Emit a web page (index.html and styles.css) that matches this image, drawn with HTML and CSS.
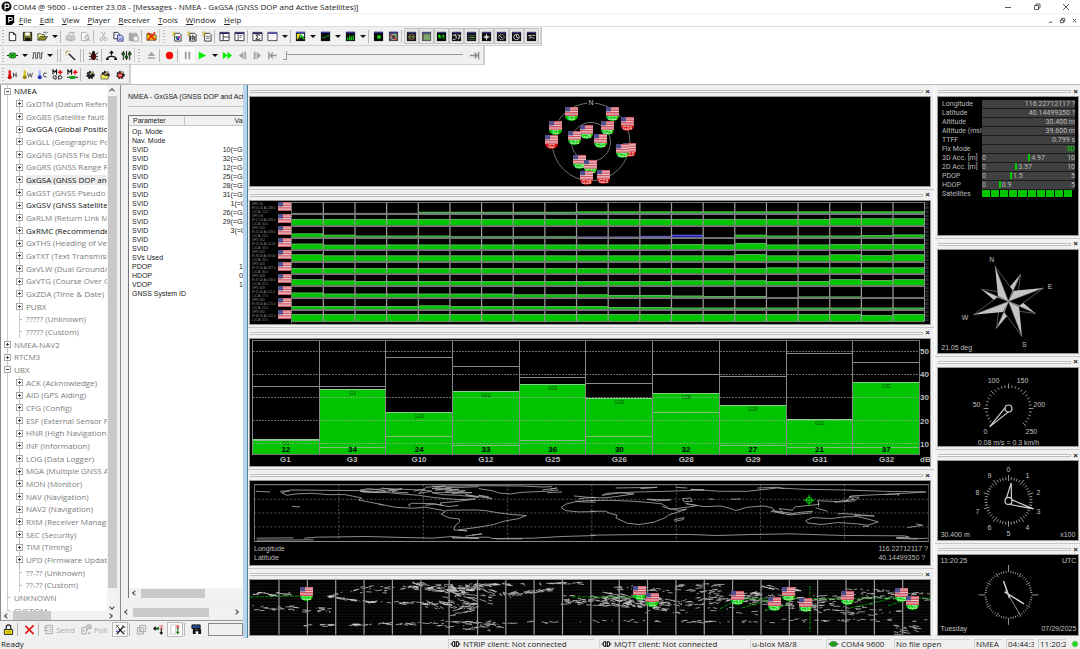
FILE: index.html
```html
<!DOCTYPE html>
<html lang="en">
<head>
<meta charset="utf-8">
<title>u-center 23.08</title>
<link rel="stylesheet" href="styles.css">
</head>
<body>
<svg class="defs" aria-hidden="true">
  <symbol id="logo" viewBox="0 0 12 12"><circle cx="6" cy="6" r="5.5" fill="#111"/><path d="M4.5 9.500V3.500H7a1.800 1.800 0 0 1 0 3.600H4.500" fill="none" stroke="#fff" stroke-width="1.300"/></symbol>
  <symbol id="doclogo" viewBox="0 0 12 12"><path d="M1 0H11V9L8 12H1Z" fill="#000"/><path d="M4.500 9V3H7a1.800 1.800 0 0 1 0 3.600H4.500" fill="none" stroke="#fff" stroke-width="1.300"/></symbol>
  <symbol id="new" viewBox="0 0 12 12"><path d="M2.500 1.500H7L9.500 4V10.500H2.500ZM7 1.500V4H9.500" fill="#fff" stroke="#222"/></symbol>
  <symbol id="save" viewBox="0 0 12 12"><path d="M1.500 1.500H10.500V10.500H1.500Z" fill="#77772a" stroke="#111"/><path d="M3.500 1.500H8.500V5H3.500Z" fill="#fff"/><path d="M3.500 7.500H9V10.500H3.500Z" fill="#111"/></symbol>
  <symbol id="open" viewBox="0 0 12 12"><path d="M1 10V3H4L5 4H8V6" fill="#ffff9a" stroke="#444"/><path d="M1 10L3.500 6H11.500L9 10Z" fill="#8a8a20" stroke="#333" stroke-width=".7"/><path d="M7 2Q9 0 10.500 2.500L11.500 1.500" fill="none" stroke="#222" stroke-width=".8"/></symbol>
  <symbol id="print" viewBox="0 0 12 12"><path d="M3.500 5L5 1.500H10L8.500 5M1.500 5.500H10.500V9.500H1.500ZM3 10.500H9M2 7.500H10" fill="#e8e8e8" stroke="#aaa"/></symbol>
  <symbol id="preview" viewBox="0 0 12 12"><path d="M1.500 1.500H6L8.500 4V10.500H1.500Z" fill="#f8f8f8" stroke="#aaa"/><circle cx="7.500" cy="7" r="2" fill="#eee" stroke="#999"/><path d="M9 8.500L11 11" stroke="#999"/></symbol>
  <symbol id="cut" viewBox="0 0 12 12"><path d="M4 1L7.500 7.500M8 1L4.500 7.500" stroke="#aaa"/><circle cx="3.800" cy="9" r="1.500" fill="none" stroke="#aaa"/><circle cx="8.200" cy="9" r="1.500" fill="none" stroke="#aaa"/></symbol>
  <symbol id="copy" viewBox="0 0 12 12"><path d="M1 1.500H5L7 3.500V8.500H1Z" fill="#fff" stroke="#223"/><path d="M5 4.500H9L11 6.500V11H5Z" fill="#dfe3ff" stroke="#23308c"/><path d="M6.500 7.500H9.500M6.500 9.200H9.500M2.500 4H4" stroke="#23308c" stroke-width=".7"/></symbol>
  <symbol id="paste" viewBox="0 0 12 12"><path d="M1.500 2.500H9.500V10.500H1.500Z" fill="#aaa" stroke="#999"/><path d="M4 1H7V3H4Z" fill="#ddd"/><path d="M5.500 5.500H11V11H5.500Z" fill="#f4f4f4" stroke="#999"/></symbol>
  <symbol id="clear" viewBox="0 0 12 12"><path d="M1 3H6L7 4.500H11V10H1Z" fill="#ffd800" stroke="#333" stroke-width=".8"/><path d="M2 2L10 10M10 1.500L2 10" stroke="#e02a10" stroke-width="1.800"/></symbol>
  <symbol id="starlog" viewBox="0 0 12 12"><path d="M4 2.500H9.500L11 4V11H4Z" fill="#fff" stroke="#333"/><path d="M1 1L5 5M5 1L1 5M3 0V6" stroke="#c5bb20" stroke-width=".8"/><path d="M5.500 6H9.500M5.500 8H9.500" stroke="#666"/></symbol>
  <symbol id="starmix" viewBox="0 0 12 12"><use href="#starlog"/><path d="M5 6H7.500V8H5Z" fill="#0a9a3a"/><path d="M7.500 5.500H10V8H7.500Z" fill="#d436c8"/><path d="M6 8H9V10H6Z" fill="#2030c0"/></symbol>
  <symbol id="starbars" viewBox="0 0 12 12"><use href="#starlog"/><path d="M5 5.500V10M7.500 4V10M9.500 6V10" stroke="#222"/></symbol>
  <symbol id="pane" viewBox="0 0 12 12"><path d="M1 1.500H11V10.500H1Z" fill="#fff" stroke="#334"/><path d="M1 2.500H11" stroke="#24246e" stroke-width="1.500"/><path d="M4.500 3V10.500M4.500 6.500H11" stroke="#334"/></symbol>
  <symbol id="pane2" viewBox="0 0 12 12"><path d="M1 1.500H11V10.500H1Z" fill="#fff" stroke="#334"/><path d="M1 2.500H11" stroke="#24246e" stroke-width="1.500"/><path d="M4.500 3V10.500M6 5H9M6 7H8" stroke="#556"/></symbol>
  <symbol id="sigma" viewBox="0 0 12 12"><path d="M1 1.500H11V10.500H1Z" fill="#fff" stroke="#334"/><path d="M1 2.500H11" stroke="#24246e" stroke-width="1.500"/><path d="M8.500 5V4.300H4L6.300 6.500L4 9H8.500V8.300" fill="none" stroke="#111"/></symbol>
  <symbol id="table" viewBox="0 0 12 12"><path d="M1 1.500H11V10.500H1Z" fill="#fff" stroke="#445"/><path d="M1 2.500H11" stroke="#4a4ac0" stroke-width="1.500"/><path d="M3 5H9M3 7H9M3 9H9" stroke="#ddd" stroke-width=".7"/></symbol>
  <symbol id="chartmix" viewBox="0 0 12 12"><path d="M1 1H11V11H1Z" fill="#111"/><path d="M1 1.500H11" stroke="#4050c8" stroke-width="1.500"/><path d="M2 3H6L3 9H2Z" fill="#f3e62d"/><path d="M6 3H10V6H6Z" fill="#e8f7ff"/><path d="M5 8L7 5L10 9" fill="none" stroke="#1ed02c" stroke-width="1.500"/></symbol>
  <symbol id="chartline" viewBox="0 0 12 12"><path d="M1 1H11V11H1Z" fill="#0a0a0a"/><path d="M1 1.500H11" stroke="#34349c" stroke-width="1.500"/><path d="M2 8L4 6.500L6 7L8 5L10 5.500" fill="none" stroke="#18a830"/></symbol>
  <symbol id="chartbars" viewBox="0 0 12 12"><path d="M1 1H11V11H1Z" fill="#0a0a0a"/><path d="M1 1.500H11" stroke="#34349c" stroke-width="1.500"/><path d="M3 10V7M5 10V5M7 10V6M9 10V4.500" stroke="#15d015" stroke-width="1.300"/></symbol>
  <symbol id="deviation" viewBox="0 0 12 12"><path d="M1 1H11V11H1Z" fill="#0a0a0a"/><path d="M1 1.500H11" stroke="#34349c" stroke-width="1.500"/><circle cx="6.500" cy="6.500" r="2.200" fill="#15c815"/></symbol>
  <symbol id="skyview" viewBox="0 0 12 12"><path d="M1 1H11V11H1Z" fill="#444"/><path d="M1 1.500H11" stroke="#34349c" stroke-width="1.500"/><circle cx="6" cy="6.500" r="3" fill="none" stroke="#ccc"/><path d="M3 4H5V6H3ZM7 8H9V10H7Z" fill="#e44"/><path d="M7 3H9V5H7Z" fill="#5cf05c"/></symbol>
  <symbol id="dsky" viewBox="0 0 12 12"><path d="M1 1H11V11H1Z" fill="#151515"/><path d="M1 1.500H11" stroke="#4646a8"/><path d="M3 4L9 9M9 4L3 9" stroke="#c22" /><path d="M2.500 6.500H9.500" stroke="#2c2"/><circle cx="6" cy="6.500" r="3" fill="none" stroke="#aaa" stroke-width=".6"/></symbol>
  <symbol id="dhist" viewBox="0 0 12 12"><path d="M1 1H11V11H1Z" fill="#555"/><path d="M1 1.500H11" stroke="#4646a8"/><path d="M3 3.500H10V10H3Z" fill="#6a6"/><path d="M3 5.500H10M3 8H10" stroke="#c99" stroke-width=".7"/></symbol>
  <symbol id="dsig" viewBox="0 0 12 12"><path d="M1 1H11V11H1Z" fill="#050505"/><path d="M1 1.500H11" stroke="#4646a8"/><path d="M2 4H5V7H7V4H9V9H8V6H6V8H3Z" fill="#1c1"/></symbol>
  <symbol id="dmap" viewBox="0 0 12 12"><path d="M1 1H11V11H1Z" fill="#111"/><path d="M1 1.500H11" stroke="#4646a8"/><path d="M2 5L5 4L6 8M7 4L10 5L8 9M2 9H5" fill="none" stroke="#ccc" stroke-width="1.200"/></symbol>
  <symbol id="ddata" viewBox="0 0 12 12"><path d="M1 1H11V11H1Z" fill="#181818"/><path d="M1 1.500H11" stroke="#4646a8"/><path d="M2 5H10M2 7H10M2 9H10" stroke="#5a5a5a" stroke-width=".8"/><path d="M5 7H9" stroke="#2c2"/></symbol>
  <symbol id="dcompass" viewBox="0 0 12 12"><path d="M1 1H11V11H1Z" fill="#111"/><path d="M1 1.500H11" stroke="#4646a8"/><path d="M6 2.500L7 5.500L10 6.500L7 7.500L6 10.500L5 7.500L2 6.500L5 5.500Z" fill="#ddd"/></symbol>
  <symbol id="dgauge" viewBox="0 0 12 12"><path d="M1 1H11V11H1Z" fill="#111"/><path d="M1 1.500H11" stroke="#4646a8"/><circle cx="6" cy="6.500" r="3" fill="none" stroke="#ccc" stroke-dasharray="1.500 .8"/><path d="M3 4L7 8" stroke="#ddd"/></symbol>
  <symbol id="dclock" viewBox="0 0 12 12"><path d="M1 1H11V11H1Z" fill="#111"/><path d="M1 1.500H11" stroke="#4646a8"/><circle cx="6" cy="6.500" r="3" fill="none" stroke="#ccc"/><path d="M6 4V6.500L8 7.500" fill="none" stroke="#ddd"/></symbol>
  <symbol id="dworld" viewBox="0 0 12 12"><path d="M1 1H11V11H1Z" fill="#111"/><path d="M1 1.500H11" stroke="#4646a8"/><path d="M2 5H6L4 6M7 4.500L10 5M3 8L6 7L9 8" fill="none" stroke="#ccc"/></symbol>
  <symbol id="plug" viewBox="0 0 12 12"><path d="M0 6H12" stroke="#111"/><path d="M5.500 3V9Q2 9 2 6T5.500 3M6.500 3V9Q10 9 10 6T6.500 3" fill="#19c419" stroke="#0a4a0a" stroke-width=".7"/></symbol>
  <symbol id="unplug" viewBox="0 0 12 12"><path d="M0 6H2M10 6H12" stroke="#111"/><path d="M5 3V9Q2 9 2 6T5 3M7 3V9Q10 9 10 6T7 3" fill="#fff" stroke="#111" stroke-width="1.300"/></symbol>
  <symbol id="wave" viewBox="0 0 12 12"><path d="M0 9H1.500V3H4V9H6V3H8.500V9H10.500V3H12" fill="none" stroke="#333" stroke-width=".9"/></symbol>
  <symbol id="wand" viewBox="0 0 12 12"><path d="M4 4L11 11" stroke="#222" stroke-width="1.500"/><path d="M3 0V2M0 3H2M1 1L2 2M6 1L5 2M1 6L2 5" stroke="#a59a1a"/></symbol>
  <symbol id="bug" viewBox="0 0 12 12"><ellipse cx="6" cy="7" rx="2.800" ry="4" fill="#5a0d0d"/><circle cx="6" cy="2.800" r="1.600" fill="#111"/><path d="M1 3L4 5M11 3L8 5M1 7H3.500M11 7H8.500M1 11L4 9M11 11L8 9M6 4V11" stroke="#111" stroke-width=".9"/></symbol>
  <symbol id="antenna" viewBox="0 0 12 12"><path d="M6 1V6M4 3.500L6 1.500L8 3.500M1 10Q1.500 7 6 7T11 10" fill="none" stroke="#111" stroke-width="1.300"/><path d="M0 9H3V11H0ZM9 9H12V11H9Z" fill="#111"/></symbol>
  <symbol id="sliders" viewBox="0 0 12 12"><path d="M2.500 1V11M6 1V11M9.500 1V11" stroke="#111"/><path d="M1 3H4V5.500H1ZM8 3H11V5.500H8ZM4.500 6.500H7.500V9H4.500Z" fill="#157a15" stroke="#111" stroke-width=".6"/></symbol>
  <symbol id="eject" viewBox="0 0 12 12"><path d="M6 2L10 6.500H2ZM2 8H10V9.500H2Z" fill="#a5a5a5"/></symbol>
  <symbol id="rec" viewBox="0 0 12 12"><circle cx="6" cy="6" r="4" fill="#f00"/></symbol>
  <symbol id="pause" viewBox="0 0 12 12"><path d="M4 2V10M8 2V10" stroke="#999" stroke-width="1.800"/></symbol>
  <symbol id="play" viewBox="0 0 12 12"><path d="M2 2L10 6L2 10Z" fill="#0e0"/></symbol>
  <symbol id="ff" viewBox="0 0 12 12"><path d="M1 2L6 6L1 10ZM6 2L11 6L6 10Z" fill="#0e0"/></symbol>
  <symbol id="stepb" viewBox="0 0 12 12"><path d="M7 2V10L2 6ZM8 2H10V10H8Z" fill="#a5a5a5"/></symbol>
  <symbol id="stepf" viewBox="0 0 12 12"><path d="M5 2V10L10 6ZM2 2H4V10H2Z" fill="#a5a5a5"/></symbol>
  <symbol id="home" viewBox="0 0 12 12"><path d="M2 2V10M10.500 6H4M6.500 3L3.500 6L6.500 9" fill="none" stroke="#999" stroke-width="1.500"/></symbol>
  <symbol id="end" viewBox="0 0 12 12"><path d="M10.500 2V10M1 6H8M6 3L9 6L6 9" fill="none" stroke="#888" stroke-width="1.500"/></symbol>
  <symbol id="hot" viewBox="0 0 12 12"><path d="M3 1.500V9" stroke="#e01010" stroke-width="2.600"/><circle cx="3" cy="9" r="2.200" fill="#c00"/><path d="M7 4V9M10 4V9M7 6.500H10" fill="none" stroke="#333"/></symbol>
  <symbol id="warm" viewBox="0 0 12 12"><path d="M3 1.500V9" stroke="#d8c820" stroke-width="2.600"/><circle cx="3" cy="9" r="2.200" fill="#998c10"/><path d="M6 4L7.300 9L8.800 5L10.200 9L11.500 4" fill="none" stroke="#444" stroke-width=".9"/></symbol>
  <symbol id="cold" viewBox="0 0 12 12"><path d="M3 1.500V9" stroke="#9ab6ff" stroke-width="2.600"/><circle cx="3" cy="9" r="2.200" fill="#2233bb"/><path d="M10.500 4.500Q7 3.500 7 6.500T10.500 8.500" fill="none" stroke="#333"/></symbol>
  <symbol id="mplus" viewBox="0 0 12 12"><path d="M1 6V1L3 3.500L5 1V6" fill="none" stroke="#111" stroke-width="1.200"/><path d="M9 1V6M6.500 3.500H11.500" stroke="#e01818" stroke-width="1.800"/><path d="M4.500 7.500V11Q1 11 1 9T4.500 7.500M7 7.500V11Q11 11 11 9T7 7.500" fill="#fff" stroke="#111"/></symbol>
  <symbol id="mplug" viewBox="0 0 12 12"><path d="M1 6V1L3 3.500L5 1V6" fill="none" stroke="#111" stroke-width="1.200"/><path d="M9 1V6M6.500 3.500H11.500" stroke="#e01818" stroke-width="1.800"/><path d="M0 9H12" stroke="#111"/><path d="M3 7.500H9V11H3Z" fill="#19a419"/></symbol>
  <symbol id="gear" viewBox="0 0 12 12"><circle cx="6" cy="6.500" r="3.600" fill="#222" stroke="#222" stroke-width="2" stroke-dasharray="1.800 1.200"/><path d="M5 6L9 3" stroke="#cfc77a" stroke-width="1.500"/></symbol>
  <symbol id="gearopen" viewBox="0 0 12 12"><use href="#gear"/><path d="M1 11V6H4L5 7H9V11Z" fill="#eee35a" stroke="#333" stroke-width=".6"/></symbol>
  <symbol id="gearred" viewBox="0 0 12 12"><use href="#gear"/><circle cx="5.500" cy="7" r="2.600" fill="#e42020"/><path d="M4 7H7" stroke="#fff"/></symbol>
  <symbol id="lock" viewBox="0 0 12 12"><path d="M3.500 6V3.500Q3.500 1 6 1T8.500 3.500V6" fill="none" stroke="#222" stroke-width="1.300"/><path d="M1.500 6H10.500V11.500H1.500Z" fill="#ffee00" stroke="#222"/><path d="M3 8H9M3 9.800H9" stroke="#8b8400" stroke-width=".8"/></symbol>
  <symbol id="redx" viewBox="0 0 12 12"><path d="M1.500 2L10.500 11M10.500 1.500L1.500 10.500" stroke="#e01515" stroke-width="1.800"/></symbol>
  <symbol id="send" viewBox="0 0 12 12"><path d="M3 1.500H10.500V10.500H3ZM1 4H6M1 7H6M7 4H9M7 6H9M7 8H9" fill="none" stroke="#aaa"/></symbol>
  <symbol id="poll" viewBox="0 0 12 12"><path d="M1 4H6V11H1ZM3 6V9" fill="none" stroke="#aaa"/><path d="M5 3L7 1H11V5H8L7 7" fill="#ccc" stroke="#aaa"/><path d="M8 9H10V11H8Z" fill="#aaa"/></symbol>
  <symbol id="tools" viewBox="0 0 12 12"><path d="M2 11L9 3M4 5L10 11" stroke="#111" stroke-width="1.400"/><path d="M8 1L11 4M8 3H11M1 1L5 5M1 4L4 1M9 9L11 7" stroke="#333" stroke-width=".9"/><path d="M1 8H4" stroke="#2a2ac8"/></symbol>
  <symbol id="docs" viewBox="0 0 12 12"><path d="M4 1.500H10.500V8.500H4ZM1.500 4H8V11H1.500Z" fill="#ececec" stroke="#aaa"/><path d="M3 8L5 6L6 9" fill="none" stroke="#999"/></symbol>
  <symbol id="flow" viewBox="0 0 12 12"><path d="M7 1H11V6H7Z" fill="#f2a0a0"/><path d="M1 5H6M3 3L1 5L3 7" fill="none" stroke="#111" stroke-width="1.300"/><path d="M4 3.500H6.500V6.500H4Z" fill="#117a22"/><path d="M9 5V11M7.500 9L9 11L10.500 9" fill="none" stroke="#111" stroke-width="1.200"/></symbol>
  <symbol id="flow2" viewBox="0 0 12 12"><path d="M1 1H6V11H1Z" fill="#fff" stroke="#ccc"/><path d="M7 1H10V5H7Z" fill="#f06a6a"/><path d="M8.500 4V10M7 8.500L8.500 10.500L10 8.500" fill="none" stroke="#1a7a1a" stroke-width="1.200"/></symbol>
  <symbol id="find" viewBox="0 0 12 12"><path d="M1 1H10V5H1Z" fill="#2a4a9a" stroke="#111"/><path d="M2 11V6L4 4H5V6H7V4H9L11 6V11H8V8H5V11Z" fill="#111"/></symbol>
  <symbol id="flag" viewBox="0 0 13 9"><path d="M0 0H13V9H0Z" fill="#f1c6cb"/><path d="M0 .8H13M0 3.300H13M0 5.800H13M0 8.300H13" stroke="#cc5763" stroke-width="1.300"/><path d="M0 0H5V4.500H0Z" fill="#50508c"/></symbol>
</svg>

<div class="app">
  <header class="titlebar">
    <svg class="ico"><use href="#logo"/></svg>
    <h1>COM4 @ 9600 - u-center 23.08 - [Messages - NMEA - GxGSA (GNSS DOP and Active Satellites)]</h1>
    <div class="winctl">
      <button aria-label="Minimize"><svg viewBox="0 0 8 8"><path d="M1 4.500H7"/></svg></button>
      <button aria-label="Restore"><svg viewBox="0 0 8 8"><path d="M1.500 2.500H5.500V6.500H1.500ZM3 2.500V1H7V5H5.500"/></svg></button>
      <button aria-label="Close"><svg viewBox="0 0 8 8"><path d="M1 1L7 7M7 1L1 7"/></svg></button>
    </div>
  </header>
  <nav class="menubar">
    <svg class="ico"><use href="#doclogo"/></svg>
    <button><u>F</u>ile</button><button><u>E</u>dit</button><button><u>V</u>iew</button><button><u>P</u>layer</button><button><u>R</u>eceiver</button><button><u>T</u>ools</button><button><u>W</u>indow</button><button><u>H</u>elp</button>
    <div class="mdictl">
      <button aria-label="Minimize window"><svg viewBox="0 0 8 8"><path d="M2 6H6"/></svg></button>
      <button aria-label="Restore window"><svg viewBox="0 0 8 8"><path d="M1.500 3.500H5V6.500H1.500ZM3 3.500V1.500H6.500V5H5"/></svg></button>
      <button aria-label="Close window"><svg viewBox="0 0 8 8"><path d="M2 2L6 6M6 2L2 6"/></svg></button>
    </div>
  </nav>

  <div class="toolbars">
    <div class="toolbar">
      <i class="grip first"></i>
      <button aria-label="New"><svg><use href="#new"/></svg></button><button aria-label="Save"><svg><use href="#save"/></svg></button><button aria-label="Open"><svg><use href="#open"/></svg></button><button class="dd" aria-label="Recent files"></button>
      <i class="sep"></i>
      <button aria-label="Print"><svg><use href="#print"/></svg></button><button aria-label="Preview"><svg><use href="#preview"/></svg></button>
      <i class="sep"></i>
      <button aria-label="Cut"><svg><use href="#cut"/></svg></button><button aria-label="Copy"><svg><use href="#copy"/></svg></button><button aria-label="Paste"><svg><use href="#paste"/></svg></button>
      <i class="sep"></i>
      <button aria-label="Clear"><svg><use href="#clear"/></svg></button>
      <i class="grip"></i>
      <button aria-label="Packet console"><svg><use href="#starmix"/></svg></button><button aria-label="Binary console"><svg><use href="#starbars"/></svg></button><button aria-label="Text console"><svg><use href="#starlog"/></svg></button>
      <i class="sep"></i>
      <button aria-label="Messages"><svg><use href="#pane"/></svg></button><button aria-label="Configuration"><svg><use href="#pane2"/></svg></button>
      <i class="sep"></i>
      <button aria-label="Statistic"><svg><use href="#sigma"/></svg></button><button aria-label="Table"><svg><use href="#table"/></svg></button><button class="dd" aria-label="Table views"></button>
      <i class="sep"></i>
      <button aria-label="Map"><svg><use href="#chartmix"/></svg></button><button class="dd" aria-label="Maps"></button><button aria-label="Chart"><svg><use href="#chartline"/></svg></button><button class="dd" aria-label="Charts"></button><button aria-label="Histogram"><svg><use href="#chartbars"/></svg></button><button class="dd" aria-label="Histograms"></button>
      <i class="sep"></i>
      <button aria-label="Deviation"><svg><use href="#deviation"/></svg></button><button aria-label="Sky"><svg><use href="#skyview"/></svg></button>
      <i class="sep"></i>
      <button class="on" aria-label="Satellite position"><svg><use href="#dsky"/></svg></button><button class="on" aria-label="Signal history"><svg><use href="#dhist"/></svg></button><button class="on" aria-label="Satellite level"><svg><use href="#dsig"/></svg></button><button class="on" aria-label="World position"><svg><use href="#dmap"/></svg></button><button class="on" aria-label="Data"><svg><use href="#ddata"/></svg></button><button class="on" aria-label="Compass"><svg><use href="#dcompass"/></svg></button><button class="on" aria-label="Speed meter"><svg><use href="#dgauge"/></svg></button><button class="on" aria-label="Clock"><svg><use href="#dclock"/></svg></button><button class="on" aria-label="Orbit map"><svg><use href="#dworld"/></svg></button>
    </div>
    <div class="toolbar">
      <i class="grip first"></i>
      <button aria-label="Connect"><svg><use href="#plug"/></svg></button><button class="dd" aria-label="Ports"></button><button aria-label="Baud rate"><svg><use href="#wave"/></svg></button><button class="dd" aria-label="Baud rates"></button>
      <i class="sep wide"></i>
      <button aria-label="Autobauding"><svg><use href="#wand"/></svg></button>
      <i class="sep wide"></i>
      <button aria-label="Debug"><svg><use href="#bug"/></svg></button>
      <i class="sep"></i>
      <button aria-label="Antenna"><svg><use href="#antenna"/></svg></button><button aria-label="Settings"><svg><use href="#sliders"/></svg></button>
      <i class="grip"></i>
      <button aria-label="Eject"><svg><use href="#eject"/></svg></button>
      <i class="sep"></i>
      <button aria-label="Record"><svg><use href="#rec"/></svg></button>
      <i class="sep"></i>
      <button class="lit" aria-label="Pause"><svg><use href="#pause"/></svg></button><button aria-label="Play"><svg><use href="#play"/></svg></button><button class="dd" aria-label="Play options"></button><button aria-label="Fast forward"><svg><use href="#ff"/></svg></button><button aria-label="Step back"><svg><use href="#stepb"/></svg></button><button aria-label="Step forward"><svg><use href="#stepf"/></svg></button><button aria-label="To start"><svg><use href="#home"/></svg></button>
      <input class="seek" type="range" min="0" max="100" value="0" aria-label="Position in log">
      <button aria-label="To end"><svg><use href="#end"/></svg></button>
    </div>
    <div class="toolbar">
      <i class="grip first"></i>
      <button aria-label="Hot start"><svg><use href="#hot"/></svg></button><button aria-label="Warm start"><svg><use href="#warm"/></svg></button><button aria-label="Cold start"><svg><use href="#cold"/></svg></button><button aria-label="Aid disconnected"><svg><use href="#mplus"/></svg></button><button aria-label="Aid connected"><svg><use href="#mplug"/></svg></button>
      <i class="sep"></i>
      <button aria-label="Store configuration"><svg><use href="#gear"/></svg></button><button aria-label="Load configuration"><svg><use href="#gearopen"/></svg></button><button aria-label="Revert configuration"><svg><use href="#gearred"/></svg></button>
    </div>
  </div>

  <main class="workspace">
    <section class="messages">
      <div class="split">
        <div class="treebox">
          <ul class="tree" id="tree"></ul>
          <div class="vbar"><b class="up"></b><i></i><b class="down"></b></div>
          <div class="hbar"><b class="left"></b><i class="t1"></i><b class="right"></b></div>
        </div>
        <div class="detail">
          <h2>NMEA - GxGSA (GNSS DOP and Active Satellites)</h2>
          <div class="tablebox">
            <div class="clip">
              <table>
                <thead><tr><th>Parameter</th><th>Value</th></tr></thead>
                <tbody id="params"></tbody>
              </table>
            </div>
            <div class="hbar"><b class="left"></b><i class="t2"></i></div>
          </div>
          <div class="hbar low"><b class="left"></b><i class="t3"></i><b class="right"></b></div>
        </div>
      </div>
      <div class="msgbar">
        <button aria-label="Lock"><svg><use href="#lock"/></svg></button><i class="sep"></i>
        <button aria-label="Clear message"><svg><use href="#redx"/></svg></button><i class="sep"></i>
        <button class="word" disabled><svg><use href="#send"/></svg>Send</button><button class="word" disabled><svg><use href="#poll"/></svg>Poll</button>
        <button class="on" aria-label="Auto polling"><svg><use href="#tools"/></svg></button><i class="sep"></i>
        <button aria-label="Copy message"><svg><use href="#docs"/></svg></button><button aria-label="Transfer"><svg><use href="#flow"/></svg></button><button class="on" aria-label="Split"><svg><use href="#flow2"/></svg></button><i class="sep"></i>
        <button aria-label="Find"><svg><use href="#find"/></svg></button>
        <input type="text" aria-label="Search text">
      </div>
    </section>

    <section class="docks centre">
      <article class="panel">
        <div class="cap"><i></i><button aria-label="Close satellite position">×</button></div>
        <svg class="view" id="sky" viewBox="250 96 680 89"></svg>
      </article>
      <article class="panel">
        <div class="cap"><i></i><button aria-label="Close signal history">×</button></div>
        <div class="view history" id="history"></div>
      </article>
      <article class="panel">
        <div class="cap"><i></i><button aria-label="Close satellite level">×</button></div>
        <div class="view signal">
          <div class="plot" id="plot"></div>
          <div class="axis"><b>50</b><b>40</b><b>30</b><b>20</b><b>10</b></div>
          <div class="names" id="names"></div>
          <b class="unit">dB</b>
        </div>
      </article>
      <article class="panel">
        <div class="cap"><i></i><button aria-label="Close world position">×</button></div>
        <div class="view world">
          <svg viewBox="12 9 2022 174" preserveAspectRatio="none">
            <path class="dots" d="M266 11V183M519 11V183M772 11V183M1024 11V183M1277 11V183M1529 11V183M1781 11V183M13 55H2035M13 96H2035M13 138H2035"/>
            <path class="frame" d="M13 11H2034V182H13Z"/>
            <g transform="translate(-15 -39)" class="coast">
              <path d="M32 70L75 72M105 70L135 68L110 74L125 82L150 78L200 76L250 80L300 80L330 86L350 90L340 96L375 103L410 110L450 118L500 121L540 118L590 127L600 131L587 139L612 150L642 153L643 162L628 175L626 186L665 189L640 186L700 178L745 170L775 160L820 152L843 143L800 140L760 135L720 128L690 126L600 127"/>
              <path d="M135 66L345 68L420 62L530 66M495 118L490 110L502 106L560 107L590 112L585 105L640 100L690 93L640 95L600 92L560 88L520 82L470 78L430 74L350 72M540 112L570 108L610 116L640 112M400 108L415 112M140 115L165 117"/>
              <path d="M345 66L370 62L420 68L380 72L345 70L400 74L450 66L410 60M430 68L470 62L440 72L490 74M505 70L540 62L520 76L560 70L530 66M540 58L600 54L560 62L620 60L570 66L640 64L600 70L660 68L620 76L680 74L560 74L590 80L640 82L700 88L660 80L740 92L700 82L730 86M600 58L650 58L700 56"/>
              <path d="M560 55L700 53L830 54L890 57L920 56M700 62L740 68L760 75L795 78L830 73L900 70L940 66M890 66L935 60L915 64M905 74L950 72M1050 97L990 100M1050 103L990 101L960 109L947 119L960 128L1000 132L1050 131M985 84L1050 90M1000 92L1048 88"/>
              <path d="M35 217L205 216M145 210L35 211M178 211L215 208L360 206L560 211L620 206L700 212L620 210L730 208L740 212L860 211L950 206L1050 203M660 205L710 198L680 202M750 213L830 213"/>
            </g>
            <g transform="translate(1020 -39)" class="coast">
              <path d="M0 130L45 130L60 137L80 142L76 150L110 166L145 170L190 163L222 150L235 141L265 131L288 124L262 127L235 122L215 108L180 104L130 100L60 97L0 98M250 156L280 149L278 155L255 160ZM170 94L240 96L200 99ZM275 92L300 90L305 100L280 101ZM215 115L240 124L280 119L320 113L285 107"/>
              <path d="M285 107L340 116L390 114L420 122L435 128L470 118L520 114L545 120L552 130L580 138L565 122L605 127L612 117L660 112L685 109L680 98L740 101L770 96L780 84L860 80L940 76L1005 72L880 70L760 66L640 64L560 60L470 70L390 70L300 64L340 66L230 70L140 72L50 76L35 82L90 74L130 78L75 86L40 90L0 88"/>
              <path d="M75 60L200 58L150 62M255 58L290 60M540 130L600 141L660 135L665 130L620 134L590 140M545 128L600 136M675 120L710 130M683 104V116M730 103L790 99L805 88L775 86L790 94L765 98M740 138L760 137L850 144L790 143M645 158L665 149L720 152L760 147L800 146L825 152L862 162L830 172L800 168L740 164L690 170L650 165ZM815 176L835 175M950 179L995 172L975 168M420 94L450 93M355 93L370 94M500 60L560 58L580 62"/>
              <path d="M0 202L150 200L300 200L380 203L480 200L600 198L760 203L940 204L955 208L915 210L990 212L1010 211M920 212L980 214M880 80L925 78L920 84"/>
            </g>
            <g class="target" transform="translate(1675 58)"><path d="M-16 0H16M0 -16V16"/><ellipse rx="9" ry="9"/></g>
          </svg>
          <dl><dt>Longitude</dt><dd>116.22712117 ?</dd><dt>Latitude</dt><dd>40.14499350 ?</dd></dl>
        </div>
      </article>
      <article class="panel">
        <div class="cap"><i></i><button aria-label="Close orbit map">×</button></div>
        <svg class="view" id="orbit" viewBox="250 580 680 55" preserveAspectRatio="none"></svg>
      </article>
    </section>

    <section class="docks side">
      <article class="panel">
        <div class="cap"><i></i><button aria-label="Close data">×</button></div>
        <div class="view"><dl class="data" id="data"></dl></div>
      </article>
      <article class="panel">
        <div class="cap"><i></i><button aria-label="Close compass">×</button></div>
        <svg class="view" id="compass" viewBox="938 249 139 104"></svg>
      </article>
      <article class="panel">
        <div class="cap"><i></i><button aria-label="Close speed">×</button></div>
        <svg class="view" id="speed" viewBox="938 367 139 79"></svg>
      </article>
      <article class="panel">
        <div class="cap"><i></i><button aria-label="Close altitude">×</button></div>
        <svg class="view" id="altitude" viewBox="938 461 139 79"></svg>
      </article>
      <article class="panel">
        <div class="cap"><i></i><button aria-label="Close clock">×</button></div>
        <svg class="view" id="clock" viewBox="938 555 139 80"></svg>
      </article>
    </section>
  </main>

  <footer class="status">
    <span class="ready">Ready</span>
    <span class="cell c1"><svg><use href="#unplug"/></svg>NTRIP client: Not connected</span>
    <span class="cell c1"><svg><use href="#unplug"/></svg>MQTT client: Not connected</span>
    <span class="cell c2">u-blox M8/8</span>
    <span class="cell c3"><svg><use href="#plug"/></svg>COM4 9600</span>
    <span class="cell c4">No file open</span>
    <span class="cell c5">NMEA</span>
    <span class="cell c5">04:44:36</span>
    <span class="cell c5">11:20:25</span>
    <span class="cell led"><svg viewBox="0 0 8 8"><circle cx="4" cy="4" r="3" fill="#22d522" stroke="#8fd88f"/></svg></span>
  </footer>
</div>
<script src="app.js"></script>
</body>
</html>
```
FILE: styles.css
```css
* { box-sizing: border-box; }
html, body { height: 100%; }
body { margin: 0; background: #fff; color: #222; font: 8px/10px "Open Sans", "Noto Sans", sans-serif; overflow: hidden; }
button { font: inherit; color: inherit; background: none; border: 0; padding: 0; margin: 0; }
h1, h2, ul, dl, dd { margin: 0; padding: 0; font-weight: inherit; font-size: inherit; }
.defs { display: none; }
.app { display: flex; flex-direction: column; height: 100vh; }

.titlebar, .menubar { display: flex; align-items: center; flex: none; }
.titlebar { height: 14px; padding-left: 1px; gap: 1px; border-bottom: 1px solid #f2f2f2; }
.titlebar h1 { color: #222; white-space: nowrap; }
.ico { width: 11px; height: 11px; flex: none; }
.winctl, .mdictl { display: flex; margin-left: auto; }
.winctl button { width: 29px; height: 13px; display: grid; place-items: center; }
.winctl svg { width: 8px; height: 8px; fill: none; stroke: #333; stroke-width: .8; }
.menubar { height: 13px; padding-left: 5px; border-bottom: 1px solid #ddd; }
.menubar > .ico { width: 10px; height: 10px; }
.menubar > button { padding: 0 4px; }
.mdictl button { width: 12px; height: 10px; display: grid; place-items: center; }
.mdictl svg { width: 7px; height: 7px; fill: none; stroke: #444; }

.toolbars { flex: none; display: flex; flex-direction: column; align-items: flex-start; height: 57px; }
.toolbar { display: flex; align-items: center; height: 19px; background: #f0f0f0; border: solid #d0d0d0; border-width: 0 2px 1px 0; padding-right: 1px; }
.toolbar button { width: 15px; height: 16px; display: grid; place-items: center; flex: none; }
.toolbar svg { width: 11px; height: 11px; }
.toolbar .dd { width: 10px; }
.dd::before { content: ""; border: solid transparent; border-width: 3px 3px 0; border-top-color: #111; }
.toolbar .on { border: 1px solid #c4c4c4; background: #e6e6e6; }
.toolbar .lit { background: #fafafa; }
.grip { width: 10px; height: 14px; border-left: 1px solid #ccc; flex: none; background: radial-gradient(circle, #bbb 35%, transparent 45%) 3px 0 / 2px 3px repeat-y; }
.grip.first { width: 5px; border: 0; background-position: 2px 0; }
.sep { width: 3px; height: 13px; border-left: 1px solid #b8b8b8; flex: none; }
.sep.wide { width: 8px; border: solid #b8b8b8; border-width: 0 1px; background: #f0f0f0; }
.toolbar .sep.wide { width: 4px; margin: 0 2px; }
.seek { appearance: none; width: 184px; height: 12px; margin: 0 0 0 3px; background: linear-gradient(#999, #999) 0 5px / 180px 1px no-repeat; }
.seek::-webkit-slider-thumb { appearance: none; width: 4px; height: 9px; background: #eee; border: solid #999; border-width: 0 1px 1px 0; }

.workspace { flex: 1; min-height: 0; display: grid; grid-template-columns: 248px minmax(0, 1fr) 146px; background: #f0f0f0; border-top: 1px solid #bbb; }
.messages { min-height: 0; display: flex; flex-direction: column; border-right: 1px solid #4a8598; box-shadow: inset -4px 0 #b9d5ec; padding-right: 4px; }
.split { flex: 1; min-height: 0; display: grid; grid-template-columns: 117px minmax(0, 1fr); gap: 3px; border-bottom: 1px solid #999; }
.treebox { min-height: 0; overflow: hidden; display: grid; grid-template: minmax(0, 1fr) 9px / minmax(0, 1fr) 10px; background: #fff; border-left: 1px solid #888; }
.tree { height: 532px; display: grid; grid-auto-rows: 1fr; list-style: none; overflow: hidden; }
.tree li { display: flex; align-items: center; gap: 4px; white-space: nowrap; color: #7d7d7d; padding-left: 3px; overflow: hidden; background: linear-gradient(#ccc, #ccc) 6px 0 / 1px 100% no-repeat; }
.tree .sub { padding-left: 15px; background: linear-gradient(#ccc, #ccc) 6px 0 / 1px 100% no-repeat, linear-gradient(#ccc, #ccc) 18px 0 / 1px 100% no-repeat; }
.tree .live { color: #111; }
.tree .sel span { background: #ececec; }
.tree .leaf { width: 6px; height: 1px; background: linear-gradient(90deg, transparent 50%, #bbb 50%); }
.tree button { width: 7px; height: 7px; margin-right: -1px; border: 1px solid #a8a8a8; background: linear-gradient(#444, #444) center / 1px 3px no-repeat, linear-gradient(#444, #444) center / 3px 1px no-repeat, #fff; flex: none; }
.tree button.open { background: linear-gradient(#444, #444) center / 3px 1px no-repeat, #fff; }
.vbar { display: flex; flex-direction: column; align-items: center; background: #f2f2f2; padding: 4px 0 2px; grid-area: 1 / 2; }
.vbar i { flex: 0 1 492px; width: 9px; margin-top: 3px; background: #c9c9c9; }
.vbar .down { margin-top: auto; }
.vbar b, .hbar b { width: 4px; height: 4px; flex: none; border: solid #444; border-width: 1px 0 0 1px; }
.up { transform: rotate(45deg); }
.down { transform: rotate(225deg); }
.left { transform: rotate(-45deg); }
.right { transform: rotate(135deg); margin-left: auto; }
.hbar { height: 10px; display: flex; align-items: center; gap: 4px; padding: 0 5px 0 4px; background: #f2f2f2; }
.hbar i { height: 9px; background: #c9c9c9; }
.t1 { width: 38px; }
.t2 { width: 64px; }
.t3 { width: 76px; }
.treebox .hbar { grid-column: 1 / 3; height: 9px; z-index: 1; }
.detail { min-width: 0; min-height: 0; display: flex; flex-direction: column; border-left: 1px solid #888; font: 7px/9px "Liberation Sans", Arial, sans-serif; }
.detail h2 { margin-left: 7px; padding: 7px 0 4px; white-space: nowrap; overflow: hidden; border-bottom: 1px solid #c4c4c4; line-height: 10px; }
.tablebox { flex: 1; min-height: 0; margin: 8px 0 0 7px; background: #fff; border: solid #777; border-width: 1px 0 0 1px; display: flex; flex-direction: column; }
.clip { flex: 1; min-height: 0; overflow: hidden; }
.detail table { width: 126px; table-layout: fixed; border-collapse: collapse; }
.detail th, .detail td { padding: 0 2px 0 3px; text-align: left; font-weight: normal; white-space: nowrap; line-height: 9px; }
.detail th { background: #f0f0f0; border: solid #c4c4c4; border-width: 0 1px 1px 0; }
.detail th:first-child { width: 55px; padding-left: 4px; }
.detail td:last-child, .detail th:last-child { text-align: right; }
.detail tbody::before { content: ""; display: block; height: 1px; }
.low { margin: 9px 0 3px; }
.msgbar { flex: none; height: 17px; display: flex; align-items: center; gap: 1px; color: #aaa; }
.msgbar button { width: 16px; height: 15px; display: flex; align-items: center; justify-content: center; gap: 2px; }
.msgbar .word { width: 34px; }
.msgbar .on { border: 1px solid #bbb; background: #f8f8f8; }
.msgbar svg { width: 11px; height: 11px; flex: none; }
.msgbar input { flex: 1; min-width: 0; height: 13px; margin-left: 3px; border: 1px solid #888; background: #f0f0f0; font: inherit; }

.docks { display: grid; min-height: 0; }
.centre { grid-template-rows: 104fr 138fr 143fr 99fr 70fr; }
.side { grid-template-rows: 153fr 118fr 94fr 94fr 95fr; border-left: 1px solid #fff; }
.panel { min-height: 0; display: grid; grid-template-rows: 11px minmax(0, 1fr); padding: 0 4px 3px 2px; border-top: 1px solid #c8c8c8; }
.panel:first-child { border-top-color: transparent; }
.side .panel { padding: 0 2px 3px 3px; }
.cap { display: flex; align-items: center; gap: 2px; }
.cap i { flex: 1; height: 3px; border: solid #bdbdbd; border-width: 1px 1px 1px 0; background: #fafafa; }
.cap button { width: 5px; font: bold 8px/8px "Liberation Sans", Arial, sans-serif; color: #111; }
.view { width: 100%; height: 100%; min-height: 0; background: #000; outline: 1px solid #9a9a9a; display: block; overflow: hidden; color: #bdbdbd; font: 7px/8px "Liberation Sans", Arial, sans-serif; }
svg.view text { font: 7px "Liberation Sans", Arial, sans-serif; fill: #c0c0c0; }
svg.view .tag { font-size: 5px; fill: #fff; text-anchor: middle; }
.mid { text-anchor: middle; }
.right-text { text-anchor: end; }
.line { fill: none; stroke: #b8b8b8; stroke-width: .8; }
.hand { fill: none; stroke: #d0d0d0; stroke-width: 1.2; }
.ring { fill: none; stroke: #8a8a8a; stroke-width: .8; }

.history { display: grid; grid-auto-rows: 1fr; padding: 1px 0; }
.hrow { display: grid; grid-template-columns: 26px 13px minmax(0, 1fr) 5px; padding-left: 2px; min-height: 0; }
.hrow p { margin: 0; font-size: 3px; line-height: 4px; white-space: nowrap; color: #8d8d8d; overflow: hidden; }
.hrow .flag { width: 13px; height: 9px; }
.hrow .trace { width: 100%; height: 100%; display: block; border: solid #777; border-width: 1px 0 0 1px; }

.signal { display: grid; grid-template: minmax(0, 1fr) 10px / minmax(0, 1fr) 10px; padding: 1px 0 1px 2px; font-weight: bold; font-size: 8px; }
.plot { display: grid; grid-auto-flow: column; grid-auto-columns: 1fr; border: solid #777; border-width: 1px 1px 1px 0; }
.col { position: relative; display: flex; flex-direction: column; justify-content: flex-end; border-left: 1px solid #888; }
.bar { background: #00c400; border-top: 1px solid #8bd08b; text-align: center; display: flex; flex-direction: column; justify-content: space-between; min-height: 0; }
.bar small { font: 5px/6px "Liberation Sans", Arial, sans-serif; color: #064a06; }
.bar b { color: #000; line-height: 8px; position: relative; z-index: 1; }
.col hr { position: absolute; left: 0; right: 0; margin: 0; border: 0; height: 1px; background: #8a8a8a; }
.col hr.low-mark { background: #7fc07f; }
.col hr.dash { background: repeating-linear-gradient(90deg, #b0b0b0 0 2px, transparent 2px 3px); opacity: .6; }
.axis { display: flex; flex-direction: column; justify-content: space-between; padding: 8px 0 6px; }
.names { display: grid; grid-auto-flow: column; grid-auto-columns: 1fr; text-align: center; line-height: 10px; }
.unit { line-height: 10px; }

.world { display: flex; flex-direction: column; padding: 3px 1px 1px 4px; }
.world svg { flex: 1; min-height: 0; width: 100%; }
.world path, .world ellipse { fill: none; vector-effect: non-scaling-stroke; }
.frame { stroke: #8a8a8a; }
.dots { stroke: #555; stroke-dasharray: 2 2; }
.coast path { stroke: #b0b0b0; stroke-width: .8; }
.target path, .target ellipse { stroke: #0d0; stroke-width: 1; }
.world dl { flex: none; display: grid; grid-template-columns: 1fr auto; line-height: 9px; padding: 2px 1px 2px 0; }

.data { display: grid; grid-template-columns: 40px minmax(0, 1fr); grid-auto-rows: 1fr; height: 91px; margin: 3px 3px 0; padding-left: 1px; white-space: nowrap; font-family: Roboto, sans-serif; }
.data dd { background: #404040; border-bottom: 1px solid #1c1c1c; text-align: right; display: flex; justify-content: flex-end; position: relative; }
.data .fix { color: #0d0; }
.data .scale { justify-content: space-between; }
.data mark { position: absolute; background: none; color: inherit; border-left: 2px solid #0c0; height: 7px; padding-left: 1px; }
.data .sats { background: none; border: 0; gap: 1px; padding-right: 3px; }
.sats i { flex: 1; height: 7px; background: #00c400; }

.status { flex: none; height: 11px; display: flex; align-items: center; gap: 4px; background: #f0f0f0; white-space: nowrap; }
.ready { flex: 1; padding-left: 1px; }
.cell { display: flex; align-items: center; gap: 2px; height: 10px; overflow: hidden; border: solid #d2d2d2; border-width: 1px 0 0 1px; padding-left: 1px; }
.cell svg { width: 11px; height: 10px; flex: none; }
.c1 { width: 147px; }
.c2 { width: 72px; }
.c3 { width: 64px; }
.c4 { width: 76px; }
.c5 { width: 28px; }
.led { width: 10px; border: 0; }
.led svg { width: 8px; height: 8px; }
```
FILE: app.js
```js
const el = id => document.getElementById(id);

/* Message tree: "+" closed branch, "-" open branch, "." leaf; "*" marks received messages */
const tree = [
  '0-*NMEA', '1+GxDTM (Datum Reference)', '1+GxGBS (Satellite fault detection)', '1+*GxGGA (Global Positioning System)',
  '1+GxGLL (Geographic Position)', '1+GxGNS (GNSS Fix Data)', '1+GxGRS (GNSS Range Residuals)', '1+*GxGSA (GNSS DOP and Active Satellites)',
  '1+GxGST (GNSS Pseudo Range)', '1+*GxGSV (GNSS Satellites in View)', '1+GxRLM (Return Link Message)', '1+*GxRMC (Recommended Minimum)',
  '1+GxTHS (Heading of Vehicle)', '1+GxTXT (Text Transmission)', '1+GxVLW (Dual Ground/Water)', '1+GxVTG (Course Over Ground)',
  '1+GxZDA (Time & Date)', '1+PUBX', '1.????? (Unknown)', '1.????? (Custom)', '0+NMEA-NAV2', '0+RTCM3', '0-UBX',
  '1+ACK (Acknowledge)', '1+AID (GPS Aiding)', '1+CFG (Config)', '1+ESF (External Sensor Fusion)', '1+HNR (High Navigation Rate)',
  '1+INF (Information)', '1+LOG (Data Logger)', '1+MGA (Multiple GNSS Assist)', '1+MON (Monitor)', '1+NAV (Navigation)',
  '1+NAV2 (Navigation)', '1+RXM (Receiver Manager)', '1+SEC (Security)', '1+TIM (Timing)', '1+UPD (Firmware Update)',
  '1.??-?? (Unknown)', '1.??-?? (Custom)', '0.UNKNOWN', '0.CUSTOM'
];
el('tree').innerHTML = tree.map(t => {
  const live = t[2] === '*', name = t.slice(live ? 3 : 2).replace('&', '&amp;');
  const knob = t[1] === '.' ? '<i class="leaf"></i>' : `<button class="${t[1] === '-' ? 'open' : ''}" aria-label="Toggle"></button>`;
  return `<li class="${t[0] === '1' ? 'sub' : ''} ${live ? 'live' : ''} ${name.startsWith('GxGSA') ? 'sel' : ''}">${knob}<span>${name}</span></li>`;
}).join('');

const svids = [10, 32, 12, 25, 28, 31, 1, 26, 29, 3];
const params = [['Op. Mode', ''], ['Nav. Mode', ''], ...svids.map(s => ['SVID', `${s}(=G${s})`]), ['SVID', ''], ['SVID', ''],
  ['SVs Used', ''], ['PDOP', '1.50'], ['HDOP', '0.90'], ['VDOP', '1.20'], ['GNSS System ID', '']];
el('params').innerHTML = params.map(p => `<tr><td>${p[0]}</td><td>${p[1]}</td></tr>`).join('');

const sat = ([n, x, y, c]) => `<ellipse cx="${x + 6.5}" cy="${y + 8.5}" rx="6.5" ry="5.5" fill="${c ? '#d81010' : '#0c0'}"/>
  <text class="tag" x="${x + 6.5}" y="${y + 13}">G${n}</text><use href="#flag" x="${x}" y="${y}" width="13" height="9"/>`;

/* Sky view */
el('sky').innerHTML = `<circle class="ring" cx="591" cy="141" r="39"/><circle class="ring" cx="591" cy="141" r="19.5"/>
  <path d="M587 97H595V104H587Z"/><text class="mid" x="591" y="104">N</text>` +
  [[3, 565, 106], [12, 606, 106], [24, 621, 116, 1], [1, 549, 120], [2, 545, 134, 1], [25, 601, 120], [26, 580, 124], [31, 568, 130],
   [32, 594, 133], [13, 623, 142, 1], [29, 616, 143], [28, 573, 154], [10, 584, 159], [18, 580, 170, 1], [23, 597, 169, 1]].map(sat).join('');

/* Signal history: 20 samples per satellite, 0..100 */
const fill = (n, v) => Array(n).fill(v);
const history = [
  ['1', '05.00 Az 288.0', '12.0', [...fill(4, 10), ...fill(5, 20), ...fill(11, 24)]],
  ['3', '17.00 Az 320.0', '34.0', [...fill(17, 64), 70, 70, 70]],
  ['10', '25.00 Az 183.0', '24.0', [42, 30, 22, 22, 22, 16, 16, 16, 16, -14, -14, -20, -30, 0, 30, 22, 22, 22, 27, 32]],
  ['12', '15.00 Az 41.00', '33.0', [58, 48, 48, ...fill(9, 50), 54, 50, 64, 50, 50, 54, 54, 54]],
  ['25', '33.00 Az 69.00', '36.0', [70, ...fill(13, 60), 72, 60, 60, 70, 62, 70]],
  ['26', '63.00 Az 327.0', '30.0', [...fill(15, 55), ...fill(5, 60)]],
  ['28', '47.00 Az 206.0', '32.0', [62, 50, ...fill(10, 45), 52, 52, 52, 45, 45, 62, 54, 62]],
  ['29', '11.00 Az 111.0', '27.0', [50, ...fill(6, 40), 34, 34, 34, 28, 28, 22, 18, 18, 0, 14, 14, 0, 0]],
  ['31', '58.00 Az 271.0', '21.0', [...fill(4, 36), 42, ...fill(5, 36), ...fill(2, 28), ...fill(8, 22)]],
  ['32', '66.00 Az 101.0', '37.0', [...fill(18, 72), 64, 72]]
];
el('history').innerHTML = history.map(([n, pos, db, v]) => `<div class="hrow"><p>GPS G${n}<br>El ${pos}<br>L1C/A: ${db}</p>
  <svg class="flag"><use href="#flag"/></svg>
  <svg class="trace" viewBox="0 0 200 100" preserveAspectRatio="none">${v.map((a, i) => a ? `<rect x="${i * 10}" y="${100 - Math.abs(a)}" width="10" height="${Math.abs(a)}" fill="${a < 0 ? '#1c1cc8' : '#00c400'}"/><rect x="${i * 10}" y="${100 - Math.abs(a)}" width="10" height="8" fill="#aaa" opacity=".6"/>` : '').join('')}
  ${v.map((a, i) => `<rect x="${i * 10 + 9.7}" width=".4" height="100" fill="#999"/>`).join('')}<rect y="91" width="200" height="9" fill="#777"/></svg><p>50<br>30<br>10</p></div>`).join('');

/* Signal levels: satellite, current, maximum, minimum in dB */
const levels = [[1, 12, 35, 11.5], [3, 34, 35, 8.4], [10, 24, 47.3, 13], [12, 33, 43.3, 9.3], [25, 36, 38.5, 11.4],
  [26, 30, 36.2, 13], [28, 32, 40, 23.4], [29, 27, 39.2, 9.3], [31, 21, 49.2, 8.4], [32, 37, 45.4, 8.4]];
const pct = v => ((v - 5.5) / 49.5 * 100).toFixed(2) + '%';
el('plot').innerHTML = levels.map(([n, v, hi, lo]) => `<div class="col"><div class="bar" style="height:${pct(v)}"><small>G${n}</small><b>${v}</b></div>
  <hr style="bottom:${pct(hi)}"><hr class="low-mark" style="bottom:${pct(lo)}">${[10, 20, 30, 40, 50].map(d => `<hr class="dash" style="bottom:${pct(d)}">`).join('')}</div>`).join('');
el('names').innerHTML = levels.map(l => `<b>G${l[0]}</b>`).join('');

/* Orbit map: relief strokes gathered along the coasts, meridians, tracks and satellites */
let seed = 7;
const rnd = () => (seed = (seed * 16807) % 2147483647) / 2147483647;
const relief = (x0, x1, y0, y1, n, slope = 0, thick = 3) => {
  let d = '';
  for (let i = 0; i < n; i++) {
    const t = rnd(), x = x0 + (x1 - x0) * t, y = y0 + (y1 - y0) * t + (rnd() - .5) * thick, l = 1 + rnd() * 6;
    d += `M${x.toFixed(1)} ${y.toFixed(1)}l${l.toFixed(1)} ${((rnd() - .5) * 2 + slope).toFixed(1)}`;
  }
  return d;
};
const coast = relief(360, 480, 590, 587, 85, 0, 7) + relief(410, 470, 585, 592, 65, 1, 8) + relief(252, 290, 593, 595, 22, 0, 4) +
  relief(325, 370, 596, 602, 24, 1, 1) + relief(325, 366, 597, 588, 12, -1, 1) + relief(365, 450, 602, 604, 40, 0, 2) + relief(425, 490, 604, 598, 45, 1, 12) + relief(450, 475, 612, 606, 34, -1, 8) +
  relief(470, 580, 585, 583, 50, 0, 2) + relief(475, 510, 588, 594, 18, 2, 4) + relief(505, 555, 595, 589, 30, -1, 3) +
  relief(252, 330, 608, 610, 35, 0, 6) + relief(300, 480, 626, 622, 55, 0, 2) + relief(435, 500, 624, 628, 35, 0, 8) +
  relief(480, 600, 623, 622, 18, 0, 3) + relief(560, 660, 600, 603, 130, 0, 10) + relief(600, 680, 597, 607, 90, 1, 12) +
  relief(610, 720, 588, 592, 45, 0, 5) + relief(680, 760, 603, 596, 75, -1, 8) + relief(740, 870, 598, 604, 125, 0, 12) +
  relief(760, 800, 586, 590, 28, 1, 3) + relief(675, 720, 585, 585, 15) + relief(840, 928, 592, 597, 60, 0, 9) + relief(800, 900, 609, 614, 30, 0, 6) +
  relief(590, 780, 621, 622, 30, 0, 2) + relief(780, 925, 621, 620, 24, 0, 3) + relief(892, 915, 630, 626, 20, 1, 10) + relief(640, 820, 612, 610, 20, 0, 8);
let meridians = '';
for (let i = 0; i < 23; i++) meridians += `M${(279 + i * 28.35).toFixed(1)} 580V635`;
let parallels = '';
for (let y = 584; y < 635; y += 3) parallels += `M250 ${y}H930`;
el('orbit').innerHTML = `<path d="${parallels}" stroke="#222" stroke-width=".6"/><path d="${coast}" fill="none" stroke="#cfcfcf" stroke-width=".7"/>
  <path d="M250 597L306 596M572 597L640 597M720 609L738 599L930 598M742 608L770 600M765 611L790 604M810 586V632M850 608L890 599M888 606L905 600" fill="none" stroke="#0b0" stroke-width=".7" stroke-dasharray="4 1"/>
  <path d="${meridians}" stroke="#999" stroke-width="1.2"/>` +
  [[12, 300, 587], [3, 633, 586], [1, 646, 593], [31, 731, 591], [26, 768, 597], [28, 782, 587], [10, 799, 598], [32, 841, 591], [25, 895, 588], [29, 906, 596]].map(sat).join('');

/* Navigation data */
const scale = (max, v) => `<dd class="scale"><span>0</span><mark style="left:${v / max * 100}%">${v}</mark><span>${max}</span></dd>`;
el('data').innerHTML = `<dt>Longitude</dt><dd>116.22712117 ?</dd><dt>Latitude</dt><dd>40.14499350 ?</dd><dt>Altitude</dt><dd>30.400 m</dd>
  <dt>Altitude (msl)</dt><dd>39.600 m</dd><dt>TTFF</dt><dd>0.799 s</dd><dt>Fix Mode</dt><dd class="fix">3D</dd>
  <dt>3D Acc. [m]</dt>${scale(10, 4.97)}<dt>2D Acc. [m]</dt>${scale(10, 3.57)}<dt>PDOP</dt>${scale(5, 1.5)}<dt>HDOP</dt>${scale(5, 0.9)}
  <dt>Satellites</dt><dd class="sats">${'<i></i>'.repeat(10)}</dd>`;

/* Dials */
const label = (t, x, y, c = 'mid') => `<text class="${c}" x="${x}" y="${y + 3}">${t}</text>`;
const ticks = (cx, cy, from, step, n, len) => {
  let d = '';
  for (let i = 0; i < n; i++) {
    const a = (from + i * step) * Math.PI / 180, [r1, r2] = len(i);
    d += `M${(cx + Math.sin(a) * r1).toFixed(1)} ${(cy - Math.cos(a) * r1).toFixed(1)}L${(cx + Math.sin(a) * r2).toFixed(1)} ${(cy - Math.cos(a) * r2).toFixed(1)}`;
  }
  return `<path class="line" d="${d}"/>`;
};
const point = (rot, len, w, h) => `<g transform="rotate(${rot})"><path d="M0 0L${-w} ${-h}L0 ${-len}Z" fill="#c4c4c4"/><path d="M0 0L${w} ${-h}L0 ${-len}Z" fill="#000" stroke="#999" stroke-width=".5"/></g>`;
el('compass').innerHTML = `<g transform="translate(1008 301) rotate(-21)">${[45, 135, 225, 315].map(r => point(r, 30, 6, 10)).join('')}${[0, 90, 180, 270].map(r => point(r, 38, 8, 9)).join('')}</g>` +
  label('N', 991, 258) + label('E', 1050, 285) + label('S', 1024, 344) + label('W', 964, 317) + label('21.05 deg', 940, 347, '');
el('speed').innerHTML = ticks(1008, 407.6, -135, 9, 31, i => i % 5 ? [21, 23.5] : [20, 25]) +
  label(0, 985, 430) + label(50, 976, 403) + label(100, 993, 379) + label(150, 1022, 379) + label(200, 1039, 403) + label(250, 1031, 430) + label('0.08 m/s = 0.3 km/h', 1008, 441) +
  '<circle class="hand" cx="1008" cy="407.6" r="3.5"/><path class="hand" d="M1004.500 407L989 426L1008 411"/>';
el('altitude').innerHTML = ticks(1008, 501, 0, 7.2, 50, i => i % 5 ? [21, 24] : [20, 26]) +
  [[1008, 469], [1027, 475], [1038, 492], [1038, 511], [1027, 527], [1008, 533], [989, 527], [977, 511], [977, 492], [989, 475]].map((p, i) => label(i, ...p)).join('') +
  label('30.400 m', 940, 534, '') + label('x100', 1075, 534, 'right-text') +
  '<circle class="hand" cx="1008" cy="501" r="3.500"/><path class="hand" d="M1006 498L1010.700 483L1011 499M1010.500 499.500L1033 509L1009 504.500"/>';
el('clock').innerHTML = ticks(1008, 595, 0, 6, 60, i => i % 15 ? (i % 5 ? [22, 24] : [20.5, 25]) : [23, 30]) +
  label('11:20:25', 940, 560, '') + label('UTC', 1076, 560, 'right-text') + label('Tuesday', 940, 628, '') + label('07/29/2025', 1076, 628, 'right-text') +
  '<path class="line" d="M1008 595L1019 614M1005 590L1008 595"/><path d="M1009 598L1003 581M1004 592L1023.500 604" stroke="#ccc" stroke-width="1.500"/>';
```
